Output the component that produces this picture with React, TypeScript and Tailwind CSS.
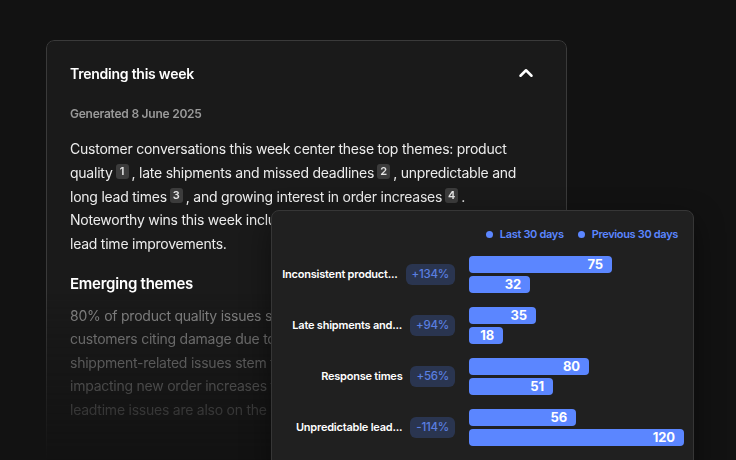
import { ChevronUp } from 'lucide-react'

type Theme = {
  label: string
  change: string
  current: { value: number; width: number }
  previous: { value: number; width: number }
}

const themes: Theme[] = [
  { label: 'Inconsistent product...', change: '+134%', current: { value: 75, width: 143 }, previous: { value: 32, width: 61 } },
  { label: 'Late shipments and...', change: '+94%', current: { value: 35, width: 67 }, previous: { value: 18, width: 34 } },
  { label: 'Response times', change: '+56%', current: { value: 80, width: 120 }, previous: { value: 51, width: 84 } },
  { label: 'Unpredictable lead...', change: '-114%', current: { value: 56, width: 107 }, previous: { value: 120, width: 215 } },
]

function Ref({ n }: { n: number }) {
  return (
    <span className="mx-[3px] inline-flex h-[15px] w-[13px] translate-y-[-2px] items-center justify-center rounded-[3px] bg-[#3c3c3c] align-middle text-[11px] font-semibold leading-none tracking-normal text-[#e6e6e6]">
      {n}
    </span>
  )
}

function Bar({ value, width }: { value: number; width: number }) {
  return (
    <div
      className="flex h-[17px] items-center justify-end rounded-[4px] bg-[#5b86ff] pr-[9px] text-[13px] font-bold leading-none tracking-[-0.01em] text-white"
      style={{ width }}
    >
      {value}
    </div>
  )
}

function ThemeChart() {
  return (
    <div className="absolute left-[271px] top-[210px] h-[270px] w-[423px] rounded-lg border border-[#363636] bg-[#202020] shadow-[0_10px_30px_rgba(0,0,0,0.45)]">
      <div className="flex items-center justify-end gap-[14px] pr-[15px] pt-[15px] text-[11px] font-semibold leading-4 tracking-[-0.03em] text-[#5b86ff]">
        <div className="flex items-center gap-[7px]">
          <span className="h-[7px] w-[7px] rounded-full bg-[#5b86ff]" />
          Last 30 days
        </div>
        <div className="flex items-center gap-[7px]">
          <span className="h-[7px] w-[7px] rounded-full bg-[#5b86ff]" />
          Previous 30 days
        </div>
      </div>
      <div className="mt-[14px] flex flex-col gap-[14px]">
        {themes.map((t) => (
          <div key={t.label} className="flex items-center">
            <div className="flex w-[183px] items-center justify-end gap-[8px]">
              <span className="whitespace-nowrap text-[11px] font-semibold tracking-[-0.02em] text-white">{t.label}</span>
              <span className="flex h-[21px] items-center rounded-md bg-[#2a3550] px-[6px] text-[11.5px] font-medium tracking-[-0.02em] text-[#5a7fe0]">
                {t.change}
              </span>
            </div>
            <div className="ml-[14px] flex flex-col gap-[3px]">
              <Bar {...t.current} />
              <Bar {...t.previous} />
            </div>
          </div>
        ))}
      </div>
    </div>
  )
}

export default function App() {
  return (
    <div className="relative h-[460px] w-[736px] overflow-hidden bg-[#121212] font-['Inter',sans-serif] tracking-[-0.015em]">
      <div className="pl-[46px] pt-[40px]">
        <section className="h-[440px] w-[521px] rounded-lg border border-[#3a3a3a] bg-[#1a1a1a] px-[23px] pt-[20px] [mask-image:linear-gradient(to_bottom,black_57%,transparent_96%)]">
          <header className="flex h-6 items-center justify-between">
            <h2 className="text-[14px] font-semibold text-white">Trending this week</h2>
            <ChevronUp size={22} strokeWidth={2.75} className="mr-[6px] text-white" />
          </header>
          <p className="mt-[19px] text-[12px] font-semibold leading-5 text-[#9a9a9a]">Generated 8 June 2025</p>
          <p className="mt-[13px] text-[14px] leading-[23.8px] text-[#ececec]">
            Customer conversations this week center these top themes: product quality
            <Ref n={1} />, late shipments and missed deadlines
            <Ref n={2} />, unpredictable and long lead times
            <Ref n={3} />, and growing interest in order increases
            <Ref n={4} />.
            <br />
            Noteworthy wins this week include quicker replies and
            <br />
            lead time improvements.
          </p>
          <h3 className="mt-[16px] text-[15px] font-semibold leading-6 text-white">Emerging themes</h3>
          <p className="mt-[8px] text-[14px] leading-[23.4px] text-[#8e8e8e]">
            80% of product quality issues stem from packaging, with
            <br />
            customers citing damage due to weak protection.
            <br />
            shippment-related issues stem from carrier delays,
            <br />
            impacting new order increases from key accounts.
            <br />
            leadtime issues are also on the rise this week.
          </p>
        </section>
      </div>
      <ThemeChart />
    </div>
  )
}
